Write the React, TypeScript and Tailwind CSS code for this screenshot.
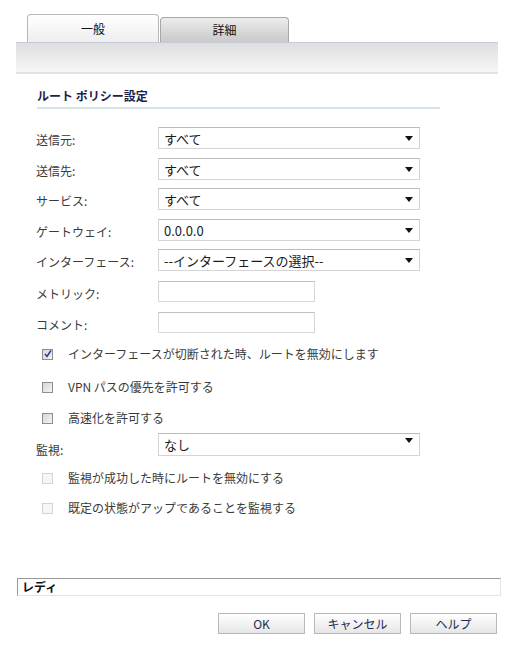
import React from "react";

const font = { fontFamily: '"Noto Sans CJK JP", "Liberation Sans", sans-serif' };

const Arrow = () => (
  <svg width="8" height="5" viewBox="0 0 8 5" className="shrink-0">
    <path d="M0 0 H8 L4 5 Z" fill="#111" />
  </svg>
);

const Select = ({ value, className = "" }: { value: string; className?: string }) => (
  <div
    className={`ml-[158px] w-[262px] h-[22px] flex items-center justify-between pl-[5px] pr-[6px] bg-white border border-[#d4d4d4] border-t-[#bcbcbc] text-[13px] text-[#1a1a1a] leading-none ${className}`}
  >
    <span>{value}</span>
    <Arrow />
  </div>
);

const Label = ({ text }: { text: string }) => (
  <span className="absolute left-[36px] top-[7px] text-[12px] text-[#3a3a3a] leading-none whitespace-nowrap">
    {text}
  </span>
);

const SelectRow = ({ label, value, className = "" }: { label: string; value: string; className?: string }) => (
  <div className={`relative ${className}`}>
    <Label text={label} />
    <Select value={value} />
  </div>
);

const InputRow = ({ label, className = "" }: { label: string; className?: string }) => (
  <div className={`relative ${className}`}>
    <Label text={label} />
    <div className="ml-[158px] w-[157px] h-[21px] bg-white border border-[#d6d6d6] border-t-[#c0c0c0]" />
  </div>
);

const CheckRow = ({
  text,
  checked = false,
  disabled = false,
  className = "",
}: {
  text: React.ReactNode;
  checked?: boolean;
  disabled?: boolean;
  className?: string;
}) => (
  <div className={`flex items-center h-[20px] pl-[42px] ${className}`}>
    <div
      className={`w-[11px] h-[11px] border flex items-center justify-center ${
        disabled
          ? "border-[#d4d4d4] bg-[#f6f6f6]"
          : "border-[#8e8e8e] bg-gradient-to-br from-[#d6d6d6] to-[#f4f4f4]"
      }`}
    >
      {checked && (
        <svg width="8" height="8" viewBox="0 0 8 8">
          <path d="M1 4 L3 6.5 L7 0.5" stroke="#2a3f9a" strokeWidth="1.6" fill="none" />
        </svg>
      )}
    </div>
    <span className="ml-[15px] text-[12px] text-[#3a3a3a] leading-none whitespace-nowrap">{text}</span>
  </div>
);

const Button = ({ text }: { text: string }) => (
  <div className="w-[87px] h-[21px] flex items-center justify-center border border-[#b8b8b8] bg-gradient-to-b from-white to-[#e6e6e6] text-[12px] text-[#1e2a55] leading-none">
    {text}
  </div>
);

export default function App() {
  return (
    <div className="w-[514px] h-[645px] bg-white overflow-hidden flex flex-col" style={font}>
      <div className="pt-[14px] pl-[27px] flex items-end h-[42px]">
        <div className="w-[132px] h-[28px] rounded-t-[4px] border border-b-0 border-[#b8b8b8] bg-gradient-to-b from-white to-[#eeeeee] flex items-center justify-center text-[12px] text-[#111]">
          一般
        </div>
        <div className="ml-[1px] w-[129px] h-[25px] rounded-t-[4px] border border-b-0 border-[#a8a8a8] bg-gradient-to-b from-[#ececec] to-[#c9c9c9] flex items-center justify-center text-[12px] text-[#111]">
          詳細
        </div>
      </div>
      <div className="ml-[16px] w-[482px] h-[32px] border-t border-t-[#c9c9dc] border-b-2 border-b-[#e2e2e2] bg-gradient-to-b from-[#dedede] to-[#f7f7f7]" />

      <div className="ml-[37px] mt-[14px] w-[403px]">
        <div className="text-[12px] font-bold text-[#1b1f4d] leading-[16px]">ルート ポリシー設定</div>
        <div className="mt-[3px] h-[2px] bg-[#d3e3ea]" />
      </div>

      <SelectRow label="送信元:" value="すべて" className="mt-[18px]" />
      <SelectRow label="送信先:" value="すべて" className="mt-[9px]" />
      <SelectRow label="サービス:" value="すべて" className="mt-[8px]" />
      <SelectRow label="ゲートウェイ:" value="0.0.0.0" className="mt-[9px]" />
      <SelectRow label="インターフェース:" value="--インターフェースの選択--" className="mt-[8px]" />
      <InputRow label="メトリック:" className="mt-[10px]" />
      <InputRow label="コメント:" className="mt-[10px]" />

      <CheckRow text="インターフェースが切断された時、ルートを無効にします" checked className="mt-[11px]" />
      <CheckRow text="VPN パスの優先を許可する" className="mt-[13px]" />
      <CheckRow text="高速化を許可する" className="mt-[11px]" />
      <div className="relative mt-[5px]">
        <span className="absolute left-[36px] top-[11px] text-[12px] text-[#3a3a3a] leading-none">監視:</span>
        <Select value="なし" className="h-[23px] items-start pt-[4px]" />
      </div>
      <CheckRow text="監視が成功した時にルートを無効にする" disabled className="mt-[12px]" />
      <CheckRow text="既定の状態がアップであることを監視する" disabled className="mt-[10px]" />

      <div className="ml-[17px] mt-[60px] w-[484px] h-[18px] border border-[#e4e4e4] border-t-[#9a9a9a] border-l-[#9a9a9a] flex items-center pl-[4px] text-[12px] font-bold text-[#111] leading-none">
        レディ
      </div>

      <div className="mt-[17px] flex justify-end gap-[9px] pr-[17px]">
        <Button text="OK" />
        <Button text="キャンセル" />
        <Button text="ヘルプ" />
      </div>
    </div>
  );
}
